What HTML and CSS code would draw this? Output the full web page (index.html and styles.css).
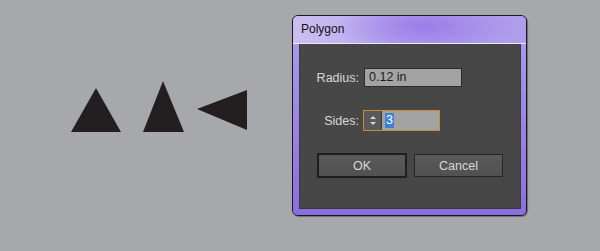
FILE: index.html
```html
<!DOCTYPE html>
<html lang="en">
<head>
    <meta charset="UTF-8">
    <title>Polygon</title>
    <link rel="stylesheet" href="styles.css">
</head>
<body>
    <main class="stage">
        <svg class="shapes" width="292" height="251" viewBox="0 0 292 251">
            <polygon points="96,88 71,132 121,132" />
            <polygon points="163,81 143,132 184,132" />
            <polygon points="197,109 247,90 247,130" />
        </svg>

        <div class="dialog">
            <div class="titlebar">Polygon</div>
            <div class="frame">
                <div class="panel">
                    <div class="fields">
                        <label for="radius">Radius:</label>
                        <div class="text-field">0.12 in</div>

                        <label for="sides">Sides:</label>
                        <div class="spin-field">
                            <span class="spinner">
                                <span class="arrow up"></span>
                                <span class="arrow down"></span>
                            </span>
                            <span class="spin-value"><span class="selected">3</span></span>
                        </div>
                    </div>
                    <div class="actions">
                        <button class="btn default">OK</button>
                        <button class="btn">Cancel</button>
                    </div>
                </div>
            </div>
        </div>
    </main>
</body>
</html>
```

FILE: styles.css
```css
/* Colours */
:root {
    --canvas: #a7a8ac;
    --shape: #231f20;
    --panel: #474747;
    --frame: #9178e3;
    --label: #d8d8d8;
    --field: #a3a3a3;
}

body {
    margin: 0;
    background: var(--canvas);
    font-family: "Liberation Sans", Arial, sans-serif;
}

.stage {
    display: flex;
    align-items: flex-start;
    height: 251px;
}

.shapes {
    flex: none;
    fill: var(--shape);
}

/* Dialog */
.dialog {
    margin-top: 15px;
    width: 235px;
    height: 201px;
    box-sizing: border-box;
    border: 1px solid #1a1722;
    border-radius: 6px;
    overflow: hidden;
    display: flex;
    flex-direction: column;
    background: var(--frame);
    box-shadow: 1px 1px 1px rgba(0, 0, 0, 0.35);
}

.titlebar {
    height: 27px;
    line-height: 27px;
    padding-left: 8px;
    font-size: 12px;
    color: #111;
    border-bottom: 1px solid #ece8f8;
    background:
        radial-gradient(ellipse 90px 30px at 57% 40%, #9a7de9 0%, rgba(154, 125, 233, 0) 100%),
        linear-gradient(to right, #cbbff1 0%, #b6a4ee 50%, #ae9cec 100%);
}

.frame {
    flex: 1;
    display: flex;
    padding: 0 5px 6px 6px;
    background: linear-gradient(to bottom, #aa97ec, #8a6ee0);
}

.panel {
    flex: 1;
    background: var(--panel);
    border: 1px solid #3a3a3a;
    border-top: none;
    padding: 24px 0 0 17px;
}

/* Fields */
.fields {
    display: grid;
    grid-template-columns: 42px auto;
    column-gap: 5px;
    row-gap: 23px;
    align-items: center;
    justify-items: start;
}

.fields label {
    justify-self: end;
    font-size: 12.5px;
    color: var(--label);
}

.text-field {
    width: 92px;
    height: 17px;
    line-height: 17px;
    padding-left: 4px;
    border: 1px solid #2b2b2b;
    background: var(--field);
    font-size: 12.5px;
    color: #1c1c1c;
}

.spin-field {
    display: flex;
    width: 75px;
    height: 19px;
    margin-left: -1px;
    border: 1px solid #c98a3c;
    background: var(--field);
}

.spinner {
    width: 17px;
    display: flex;
    flex-direction: column;
    align-items: center;
    justify-content: center;
    gap: 3px;
    background: #595959;
    border-right: 1px solid #3a3a3a;
}

.arrow {
    width: 0;
    height: 0;
    border-left: 3px solid transparent;
    border-right: 3px solid transparent;
}

.arrow.up {
    border-bottom: 3px solid #d8d8d8;
}

.arrow.down {
    border-top: 3px solid #d8d8d8;
}

.spin-value {
    padding: 2px 0 0 3px;
    font-size: 12.5px;
    line-height: 15px;
}

.selected {
    display: inline-block;
    padding: 0 1px;
    background: #3d7fd9;
    color: #fff;
}

/* Buttons */
.actions {
    display: flex;
    align-items: center;
    gap: 7px;
    margin-top: 22px;
}

.btn {
    width: 89px;
    height: 23px;
    margin: 0;
    padding: 0;
    border: 1px solid #262626;
    background: linear-gradient(to bottom, #5a5a5a, #515151);
    color: var(--label);
    font-family: inherit;
    font-size: 12.5px;
}

.btn.default {
    width: 90px;
    height: 25px;
    border: 2px solid #1e1e1e;
}
```
